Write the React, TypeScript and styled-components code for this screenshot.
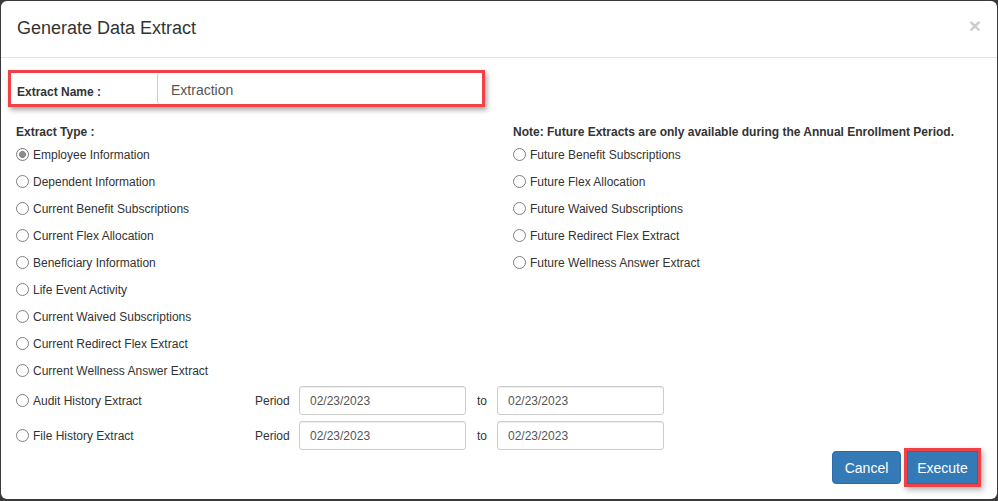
import React, { useState } from "react";
import styled, { createGlobalStyle } from "styled-components";

const GlobalStyle = createGlobalStyle`
  html, body {
    margin: 0;
    padding: 0;
    background: #3a3a3a;
    font-family: "Liberation Sans", Arial, sans-serif;
    color: #333;
  }
`;

const currentTypes = [
  "Employee Information",
  "Dependent Information",
  "Current Benefit Subscriptions",
  "Current Flex Allocation",
  "Beneficiary Information",
  "Life Event Activity",
  "Current Waived Subscriptions",
  "Current Redirect Flex Extract",
  "Current Wellness Answer Extract",
];

const futureTypes = [
  "Future Benefit Subscriptions",
  "Future Flex Allocation",
  "Future Waived Subscriptions",
  "Future Redirect Flex Extract",
  "Future Wellness Answer Extract",
];

const historyTypes = ["Audit History Extract", "File History Extract"];

export default function App() {
  const [selected, setSelected] = useState<string>("Employee Information");
  const [name, setName] = useState<string>("Extraction");

  const radio = (label: string) => (
    <RadioRow key={label} onClick={() => setSelected(label)}>
      <RadioDot $checked={selected === label} />
      <span>{label}</span>
    </RadioRow>
  );

  return (
    <>
      <GlobalStyle />
      <Page>
        <Modal>
          <Header>
            <Title>Generate Data Extract</Title>
            <Close>×</Close>
          </Header>
          <Body>
            <NameHighlight>
              <NameLabel>Extract Name :</NameLabel>
              <NameInput value={name} onChange={(e) => setName(e.target.value)} />
            </NameHighlight>

            <Columns>
              <Column>
                <SectionLabel>Extract Type :</SectionLabel>
                {currentTypes.map(radio)}
              </Column>
              <Column>
                <SectionLabel>Note: Future Extracts are only available during the Annual Enrollment Period.</SectionLabel>
                {futureTypes.map(radio)}
              </Column>
            </Columns>

            <HistoryList>
              {historyTypes.map((label) => (
                <HistoryRow key={label}>
                  <HistoryName>{radio(label)}</HistoryName>
                  <PeriodLabel>Period</PeriodLabel>
                  <DateInput defaultValue="02/23/2023" />
                  <ToLabel>to</ToLabel>
                  <DateInput defaultValue="02/23/2023" />
                </HistoryRow>
              ))}
            </HistoryList>
          </Body>
          <Footer>
            <Button>Cancel</Button>
            <Button $highlight>Execute</Button>
          </Footer>
        </Modal>
      </Page>
    </>
  );
}

const Page = styled.div`
  width: 998px;
  height: 501px;
  padding: 1px 1px 2px 1px;
  box-sizing: border-box;
  display: flex;
`;

const Modal = styled.div`
  flex: 1;
  background: #fff;
  border-radius: 6px;
  display: flex;
  flex-direction: column;
  overflow: hidden;
`;

const Header = styled.div`
  height: 56px;
  border-bottom: 1px solid #e5e5e5;
  display: flex;
  align-items: center;
  justify-content: space-between;
  padding: 0 16px 0 16px;
`;

const Title = styled.h4`
  margin: 0;
  font-size: 18px;
  font-weight: normal;
  color: #333;
  margin-top: -1px;
`;

const Close = styled.span`
  font-size: 21px;
  font-weight: bold;
  color: #000;
  opacity: 0.2;
  margin-top: -6px;
`;

const Body = styled.div`
  flex: 1;
  padding: 12px 15px 0 15px;
`;

const NameHighlight = styled.div`
  margin-left: -8px;
  width: 477px;
  height: 37px;
  box-sizing: border-box;
  border: 3px solid #f04146;
  box-shadow: 2px 3px 5px rgba(0, 0, 0, 0.35);
  display: flex;
`;

const NameLabel = styled.div`
  width: 146px;
  display: flex;
  align-items: center;
  padding-left: 6px;
  box-sizing: border-box;
  font-size: 12px;
  font-weight: bold;
  padding-top: 6px;
`;

const NameInput = styled.input`
  flex: 1;
  border: none;
  border-left: 1px solid #ccc;
  border-radius: 3px 0 0 3px;
  padding: 2px 0 0 13px;
  font-family: "Liberation Sans", Arial, sans-serif;
  font-size: 14px;
  color: #555;
  outline: none;
`;

const Columns = styled.div`
  display: grid;
  grid-template-columns: 497px 1fr;
  margin-top: 17px;
`;

const Column = styled.div`
  display: flex;
  flex-direction: column;
`;

const SectionLabel = styled.div`
  font-size: 12px;
  font-weight: bold;
  line-height: 17px;
  height: 17px;
  white-space: nowrap;
`;

const RadioRow = styled.label`
  display: flex;
  align-items: center;
  gap: 4px;
  height: 27px;
  font-size: 12px;
  color: #333;
  cursor: pointer;
  white-space: nowrap;
`;

const RadioDot = styled.span<{ $checked?: boolean }>`
  width: 11px;
  height: 11px;
  border-radius: 50%;
  border: 1px solid ${(p) => (p.$checked ? "#7a7a7a" : "#808080")};
  background: ${(p) => (p.$checked ? "radial-gradient(circle, #8c8c8c 0 3.2px, #fff 3.8px)" : "#fff")};
  margin-top: -1px;
  flex-shrink: 0;
`;

const HistoryList = styled.div`
  display: flex;
  flex-direction: column;
  gap: 6px;
  margin-top: 2px;
`;

const HistoryRow = styled.div`
  display: flex;
  align-items: center;
  height: 29px;
`;

const HistoryName = styled.div`
  width: 239px;
`;

const PeriodLabel = styled.span`
  width: 44px;
  font-size: 12px;
`;

const ToLabel = styled.span`
  width: 20px;
  padding-left: 11px;
  font-size: 12px;
`;

const DateInput = styled.input`
  width: 167px;
  height: 29px;
  box-sizing: border-box;
  border: 1px solid #ccc;
  border-radius: 3px;
  padding: 0 0 0 10px;
  font-family: "Liberation Sans", Arial, sans-serif;
  font-size: 12px;
  color: #555;
  box-shadow: inset 0 1px 1px rgba(0, 0, 0, 0.075);
  outline: none;
`;

const Footer = styled.div`
  display: flex;
  justify-content: flex-end;
  gap: 6px;
  padding: 0 19px 15px 16px;
`;

const Button = styled.button<{ $highlight?: boolean }>`
  width: ${(p) => (p.$highlight ? "71px" : "69px")};
  height: 33px;
  background: #337ab7;
  border: 1px solid #2e6da4;
  border-radius: 4px;
  color: #fff;
  font-family: "Liberation Sans", Arial, sans-serif;
  font-size: 14px;
  padding: 0;
  ${(p) =>
    p.$highlight &&
    `
    border-radius: 0;
    outline: 3px solid #f04146;
    box-shadow: 2px 3px 6px 3px rgba(0, 0, 0, 0.3);
  `}
`;
